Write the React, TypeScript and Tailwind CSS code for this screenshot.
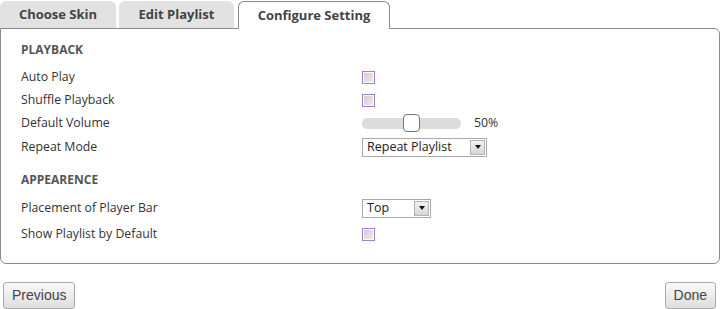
import React from "react";

const font = { fontFamily: '"Open Sans", "Liberation Sans", sans-serif' };

function Checkbox() {
  return (
    <span className="inline-block h-[13px] w-[13px] border border-[#a77dd0] bg-white p-[1px]">
      <span className="block h-full w-full bg-gradient-to-br from-[#cfcfcf] to-[#ececec]" />
    </span>
  );
}

function Select({ value, width }: { value: string; width: string }) {
  return (
    <div className={`flex h-[19px] items-center border border-[#a9a9a9] bg-white ${width}`}>
      <span className="flex-1 pl-[4px] text-[12.5px] leading-none text-[#222]">{value}</span>
      <span className="m-[1px] flex h-[15px] w-[15px] items-center justify-center border border-[#b5b5b5] bg-gradient-to-b from-[#f2f2f2] to-[#d6d6d6]">
        <span className="h-0 w-0 border-x-[3px] border-t-[4px] border-x-transparent border-t-[#111]" />
      </span>
    </div>
  );
}

function Row({ label, children, className }: { label: string; children?: React.ReactNode; className: string }) {
  return (
    <div className={`flex items-center ${className}`}>
      <span className="w-[341px] text-[12.3px] text-[#333]">{label}</span>
      {children}
    </div>
  );
}

export default function App() {
  return (
    <div className="h-[309px] w-[720px] bg-white" style={font}>
      <div className="flex h-[28px] items-end">
        <div className="flex h-[27px] w-[116px] items-center justify-center rounded-t-[6px] bg-[#e2e2e2] text-[13px] font-bold text-[#444]">
          Choose Skin
        </div>
        <div className="ml-[3px] flex h-[27px] w-[115px] items-center justify-center rounded-t-[6px] bg-[#e2e2e2] text-[13px] font-bold text-[#444]">
          Edit Playlist
        </div>
        <div className="relative z-10 mb-[-1px] ml-[4px] flex h-[28px] w-[152px] items-center justify-center rounded-t-[6px] border border-b-0 border-[#8a8a8a] bg-white text-[13px] font-bold text-[#444]">
          Configure Setting
        </div>
      </div>
      <div className="h-[236px] rounded-b-[6px] rounded-tr-[6px] border border-[#8a8a8a] pl-[20px] pt-[9px]">
        <div className="flex h-[24px] items-center text-[12px] font-bold text-[#555]">PLAYBACK</div>
        <Row label="Auto Play" className="mt-[3px] h-[24px]">
          <Checkbox />
        </Row>
        <Row label="Shuffle Playback" className="h-[23px]">
          <Checkbox />
        </Row>
        <Row label="Default Volume" className="h-[23px]">
          <div className="relative h-[11px] w-[99px] rounded-full bg-[#dcdcdc]">
            <span className="absolute left-[41px] top-[-4px] h-[18px] w-[17px] rounded-[4px] border border-[#777] bg-white" />
          </div>
          <span className="ml-[13px] text-[12.3px] text-[#333]">50%</span>
        </Row>
        <Row label="Repeat Mode" className="h-[24px]">
          <Select value="Repeat Playlist" width="w-[125px]" />
        </Row>
        <div className="mt-[9px] flex h-[24px] items-center text-[12px] font-bold text-[#555]">APPEARENCE</div>
        <Row label="Placement of Player Bar" className="mt-[4px] h-[24px]">
          <Select value="Top" width="w-[69px]" />
        </Row>
        <Row label="Show Playlist by Default" className="mt-[2px] h-[24px]">
          <Checkbox />
        </Row>
      </div>
      <div className="flex justify-between pl-[3px] pr-[4px] pt-[18px]" style={{ fontFamily: '"Liberation Sans", Arial, sans-serif' }}>
        <button className="h-[27px] rounded-[3px] border border-[#aaa] bg-gradient-to-b from-[#fafafa] to-[#dedede] px-[8px] text-[14px] text-[#444]">
          Previous
        </button>
        <button className="h-[27px] rounded-[3px] border border-[#aaa] bg-gradient-to-b from-[#fafafa] to-[#dedede] px-[8px] text-[14px] text-[#444]">
          Done
        </button>
      </div>
    </div>
  );
}
